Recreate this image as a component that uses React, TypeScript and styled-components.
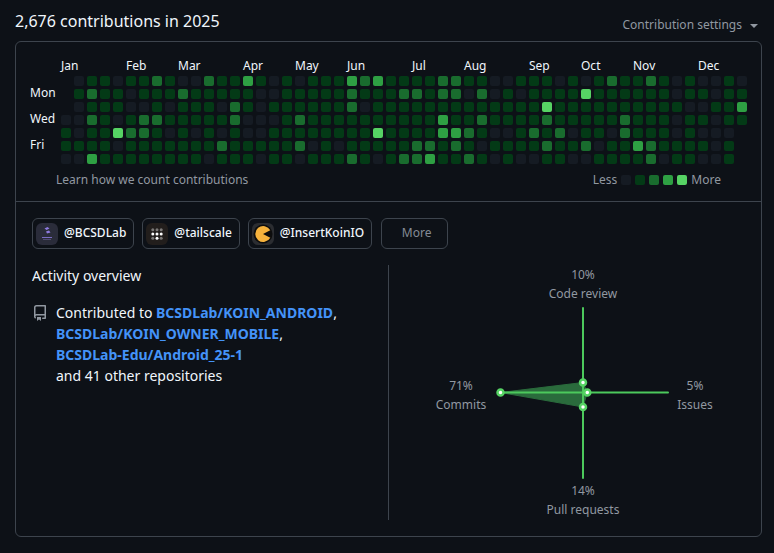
import React from "react";
import styled, { createGlobalStyle } from "styled-components";

const Global = createGlobalStyle`
  html, body { margin: 0; padding: 0; background: #0d1117; }
  body { font-family: "Noto Sans", sans-serif; color: #f0f6fc; }
`;

const Page = styled.div`
  width: 774px;
  height: 553px;
  box-sizing: border-box;
  padding: 0 12px 0 15px;
  background: #0d1117;
  overflow: hidden;
`;

const Header = styled.header`
  height: 41px;
  display: flex;
  justify-content: space-between;
  align-items: flex-start;
`;

const Title = styled.h2`
  margin: 10px 0 0;
  font-size: 16px;
  line-height: 22px;
  font-weight: 400;
  color: #f0f6fc;
`;

const Settings = styled.div`
  display: flex;
  align-items: center;
  gap: 8px;
  margin: 16px 4px 0 0;
  font-size: 12px;
  line-height: 18px;
  color: #9198a1;
`;

const Caret = styled.span`
  width: 0;
  height: 0;
  border-left: 4px solid transparent;
  border-right: 4px solid transparent;
  border-top: 4px solid #9198a1;
  margin-top: 1px;
`;

const Card = styled.section`
  width: 747px;
  height: 496px;
  box-sizing: border-box;
  border: 1px solid #3d444d;
  border-radius: 6px;
  display: flex;
  flex-direction: column;
`;

const GraphPanel = styled.div`
  height: 160px;
  flex: none;
  box-sizing: border-box;
  border-bottom: 1px solid #3d444d;
  padding: 15px 0 0 14px;
`;

const Grid = styled.div`
  display: grid;
  grid-template-columns: 31px repeat(53, 13px);
  grid-template-rows: 16px repeat(7, 10px);
  row-gap: 3px;
  margin-right: -3px;
`;

const Month = styled.div<{ $col: number }>`
  grid-row: 1;
  grid-column: ${(p) => p.$col + 2};
  font-size: 12px;
  line-height: 18px;
  color: #f0f6fc;
  white-space: nowrap;
`;

const Day = styled.div<{ $row: number }>`
  grid-row: ${(p) => p.$row + 2};
  grid-column: 1;
  font-size: 12px;
  line-height: 10px;
  margin-top: -1px;
  color: #f0f6fc;
`;

const LEVELS = ["#151b23", "#033a16", "#196c2e", "#2ea043", "#56d364"];

const Cell = styled.div<{ $level: number }>`
  width: 10px;
  height: 10px;
  border-radius: 2px;
  background: ${(p) => LEVELS[p.$level]};
`;

const GraphFooter = styled.div`
  display: flex;
  justify-content: space-between;
  align-items: center;
  margin: 7px 40px 0 26px;
  height: 18px;
  font-size: 12px;
  line-height: 18px;
  color: #9198a1;
`;

const Legend = styled.div`
  display: flex;
  align-items: center;
  gap: 4px;
`;

const Lower = styled.div`
  flex: 1;
  padding: 16px 16px 0;
  display: flex;
  flex-direction: column;
  min-height: 0;
`;

const Pills = styled.div`
  display: flex;
  gap: 8px;
  height: 31px;
`;

const Pill = styled.div`
  display: flex;
  align-items: center;
  gap: 6px;
  box-sizing: border-box;
  height: 31px;
  padding: 0 7px 0 3px;
  border: 1px solid #3d444d;
  border-radius: 6px;
  font-size: 12px;
  font-weight: 500;
  color: #f0f6fc;
`;

const PillText = styled.span`
  margin-bottom: 2px;
`;

const MoreButton = styled.div`
  display: flex;
  align-items: center;
  justify-content: center;
  box-sizing: border-box;
  width: 67px;
  height: 31px;
  margin-left: 1px;
  padding-left: 4px;
  padding-bottom: 2px;
  border: 1px solid #3d444d;
  border-radius: 6px;
  font-size: 12px;
  font-weight: 400;
  color: #848b95;
`;

const Avatar = styled.svg`
  display: block;
  width: 22px;
  height: 22px;
  flex: none;
`;

const Overview = styled.div`
  display: flex;
  margin-top: 16px;
  height: 255px;
`;

const Left = styled.div`
  width: 357px;
  flex: none;
  box-sizing: border-box;
  border-right: 1px solid #3d444d;
`;

const OverviewTitle = styled.h3`
  margin: 0;
  font-size: 14px;
  line-height: 21px;
  font-weight: 400;
  color: #f0f6fc;
`;

const Contributed = styled.div`
  display: flex;
  gap: 8px;
  margin-top: 16px;
`;

const RepoIcon = styled.svg`
  width: 16px;
  height: 16px;
  flex: none;
  fill: #9198a1;
  margin-top: 3px;
`;

const RepoText = styled.div`
  font-size: 14px;
  line-height: 21px;
  color: #f0f6fc;
`;

const RepoLink = styled.a`
  color: #4493f8;
  font-weight: 700;
  text-decoration: none;
`;

const Radar = styled.svg`
  display: block;
  width: 373px;
  height: 255px;
  flex: none;
`;

const AxisLabel = styled.text`
  font-family: "Noto Sans", sans-serif;
  font-size: 12px;
  fill: #9198a1;
  text-anchor: middle;
`;

const R0 = [-1,0,1,1,0,1,1,2,1,0,0,2,1,1,3,1,0,1,0,1,1,1,3,2,3,1,1,1,1,2,2,1,1,0,0,1,1,1,0,1,0,1,2,1,1,2,1,0,1,0,0,1,0];
const R1 = [-1,1,2,1,1,0,1,1,1,2,1,1,1,1,1,0,0,1,1,1,1,1,2,1,1,1,2,2,1,2,2,0,2,0,1,0,1,1,1,1,4,1,1,1,1,1,1,0,1,1,0,1,1];
const R2 = [-1,0,1,1,1,0,0,1,0,1,1,1,0,2,1,0,1,1,1,1,1,1,2,0,1,1,1,1,1,1,1,1,1,1,1,1,1,4,1,1,1,1,1,1,1,1,1,1,0,0,1,1,3];
const R3 = [0,0,2,1,0,1,2,2,1,1,1,1,1,2,0,0,0,1,2,1,1,1,1,1,1,1,1,1,1,3,1,1,2,1,1,1,1,2,1,1,1,1,1,2,1,1,1,0,1,1,0,1,1];
const R4 = [1,0,1,1,4,2,2,1,0,1,0,1,0,1,0,0,1,1,1,1,1,1,1,1,4,1,1,1,1,3,3,2,1,0,0,1,2,1,2,0,1,1,0,2,1,1,1,0,1,0,0,0,-1];
const R5 = [1,1,1,1,0,1,1,1,1,1,1,1,2,1,1,1,1,1,2,0,1,0,1,1,1,1,1,2,2,1,2,1,0,1,1,1,1,2,1,1,2,0,1,1,3,2,1,1,1,1,0,1,-1];
const R6 = [0,0,3,1,1,1,1,1,1,1,1,0,1,1,1,0,1,1,0,1,1,1,2,1,0,1,2,2,3,1,1,2,1,0,1,0,0,1,1,0,0,1,1,1,1,2,0,1,1,0,0,1,-1];
const MATRIX = [R0, R1, R2, R3, R4, R5, R6];

const MONTHS: [string, number][] = [
  ["Jan", 0], ["Feb", 5], ["Mar", 9], ["Apr", 14], ["May", 18], ["Jun", 22],
  ["Jul", 27], ["Aug", 31], ["Sep", 36], ["Oct", 40], ["Nov", 44], ["Dec", 49],
];

const DAYS: [string, number][] = [["Mon", 1], ["Wed", 3], ["Fri", 5]];

export default function App() {
  return (
    <>
      <Global />
      <Page>
        <Header>
          <Title>2,676 contributions in 2025</Title>
          <Settings>
            Contribution settings
            <Caret />
          </Settings>
        </Header>
        <Card>
          <GraphPanel>
            <Grid>
              {MONTHS.map(([m, c]) => (
                <Month key={m} $col={c}>{m}</Month>
              ))}
              {DAYS.map(([d, r]) => (
                <Day key={d} $row={r}>{d}</Day>
              ))}
              {MATRIX.map((row, r) =>
                row.map((lv, c) =>
                  lv < 0 ? null : (
                    <Cell key={`${r}-${c}`} $level={lv} style={{ gridRow: r + 2, gridColumn: c + 2 }} />
                  )
                )
              )}
            </Grid>
            <GraphFooter>
              <span>Learn how we count contributions</span>
              <Legend>
                <span>Less</span>
                {[0, 1, 2, 3, 4].map((l) => (
                  <Cell key={l} $level={l} />
                ))}
                <span>More</span>
              </Legend>
            </GraphFooter>
          </GraphPanel>
          <Lower>
            <Pills>
              <Pill>
                <Avatar viewBox="0 0 22 22">
                  <rect width="22" height="22" rx="6" fill="#2a2c3a" />
                  <path d="M8.5 5.5l3-1.5 2 1.5-3 1.5zM10 8.5l3-1 1.5 2-3.5 1z" fill="#8f7be0" />
                  <rect x="6" y="14" width="10" height="1" fill="#7a6cc4" />
                  <rect x="7" y="16" width="8" height="0.8" fill="#5a5480" />
                </Avatar>
                <PillText>@BCSDLab</PillText>
              </Pill>
              <Pill>
                <Avatar viewBox="0 0 22 22">
                  <rect width="22" height="22" rx="6" fill="#221e1c" />
                  {[6.8, 11, 15.2].flatMap((y, r) =>
                    [6.8, 11, 15.2].map((x, c) => (
                      <circle
                        key={`${r}${c}`}
                        cx={x}
                        cy={y}
                        r="1.5"
                        fill="#fff"
                        opacity={r === 1 || (r === 2 && c === 1) ? 1 : 0.4}
                      />
                    ))
                  )}
                </Avatar>
                <PillText>@tailscale</PillText>
              </Pill>
              <Pill>
                <Avatar viewBox="0 0 22 22">
                  <rect width="22" height="22" rx="6" fill="#2b2d31" />
                  <circle cx="11" cy="11" r="9.5" fill="#0d0d0d" />
                  <path d="M11 11L18.3 7.2A8 8 0 1 0 18.3 14.8Z" fill="#f6b23c" />
                </Avatar>
                <PillText>@InsertKoinIO</PillText>
              </Pill>
              <MoreButton>More</MoreButton>
            </Pills>
            <Overview>
              <Left>
                <OverviewTitle>Activity overview</OverviewTitle>
                <Contributed>
                  <RepoIcon viewBox="0 0 16 16">
                    <path d="M2 2.5A2.5 2.5 0 0 1 4.5 0h8.75a.75.75 0 0 1 .75.75v12.5a.75.75 0 0 1-.75.75h-2.5a.75.75 0 0 1 0-1.5h1.75v-2h-8a1 1 0 0 0-.714 1.7.75.75 0 1 1-1.072 1.05A2.495 2.495 0 0 1 2 11.5Zm10.5-1h-8a1 1 0 0 0-1 1v6.708A2.486 2.486 0 0 1 4.5 9h8ZM5 12.25a.25.25 0 0 1 .25-.25h3.5a.25.25 0 0 1 .25.25v3.25a.25.25 0 0 1-.4.2l-1.45-1.087a.249.249 0 0 0-.3 0L5.4 15.7a.25.25 0 0 1-.4-.2Z" />
                  </RepoIcon>
                  <RepoText>
                    Contributed to <RepoLink href="#">BCSDLab/KOIN_ANDROID</RepoLink>,
                    <br />
                    <RepoLink href="#">BCSDLab/KOIN_OWNER_MOBILE</RepoLink>,
                    <br />
                    <RepoLink href="#">BCSDLab-Edu/Android_25-1</RepoLink>
                    <br />
                    and 41 other repositories
                  </RepoText>
                </Contributed>
              </Left>
              <Radar viewBox="0 0 373 255">
                <g stroke="#4cc95c" strokeWidth="2" strokeLinecap="round">
                  <path d="M194 43V213" />
                  <path d="M194 127.5H279" />
                </g>
                <path d="M111.5 127.5L194 117.5L198.3 127.5L194 142Z" fill="#2a6b3c" stroke="#2a6b3c" strokeWidth="1" />
                <path d="M111.5 127.5H194" stroke="#4cc95c" strokeWidth="2" />
                <path d="M194 117.5V142" stroke="#4cc95c" strokeWidth="2" />
                {[[111.5, 127.5], [194, 117.5], [198.3, 127.5], [194, 142]].map(([x, y]) => (
                  <circle key={`${x}${y}`} cx={x} cy={y} r="3" fill="#fff" stroke="#56d364" strokeWidth="2.5" />
                ))}
                <AxisLabel x="194" y="14">10%</AxisLabel>
                <AxisLabel x="194" y="33">Code review</AxisLabel>
                <AxisLabel x="194" y="230">14%</AxisLabel>
                <AxisLabel x="194" y="249">Pull requests</AxisLabel>
                <AxisLabel x="72" y="125">71%</AxisLabel>
                <AxisLabel x="72" y="144">Commits</AxisLabel>
                <AxisLabel x="306" y="125">5%</AxisLabel>
                <AxisLabel x="306" y="144">Issues</AxisLabel>
              </Radar>
            </Overview>
          </Lower>
        </Card>
      </Page>
    </>
  );
}
